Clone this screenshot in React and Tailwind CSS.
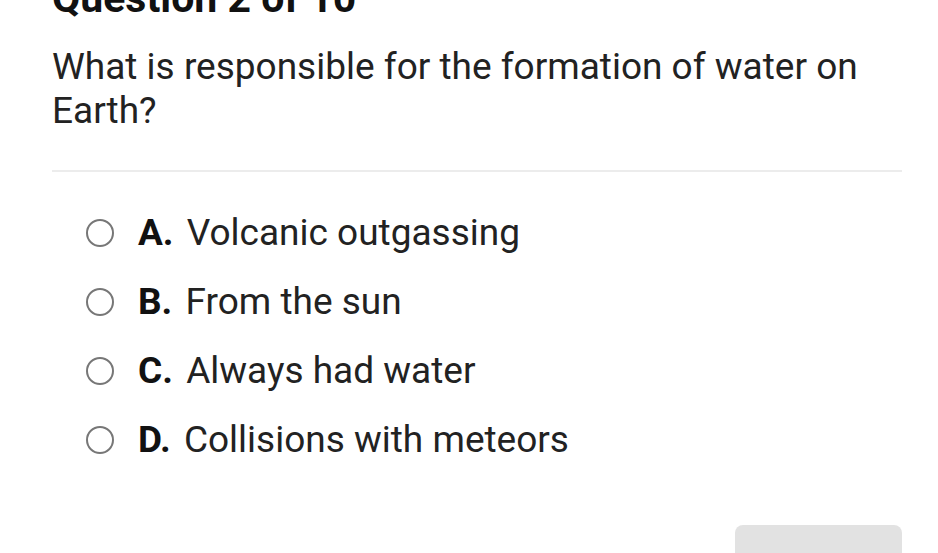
import React from "react";

const options = [
  { letter: "A.", text: "Volcanic outgassing" },
  { letter: "B.", text: "From the sun" },
  { letter: "C.", text: "Always had water" },
  { letter: "D.", text: "Collisions with meteors" },
];

const App = () => {
  return (
    <div
      className="w-[938px] h-[553px] overflow-hidden bg-white relative"
      style={{ fontFamily: "Roboto, 'Liberation Sans', sans-serif" }}
    >
      <div className="pl-[52px] pr-[36px]">
        <h1 className="text-[41px] leading-[44px] font-bold text-[#111] mt-[-24px]">
          Question 2 of 10
        </h1>
        <p className="mt-[25px] text-[37px] leading-[44px] text-[#222]">
          What is responsible for the formation of water on Earth?
        </p>
        <div className="mt-[37px] h-[2px] bg-[#ececec]" />
        <div className="mt-[39px] pl-[34px] flex flex-col gap-[25px]">
          {options.map((opt) => (
            <div key={opt.letter} className="flex items-center h-[44px]">
              <span className="w-[28px] h-[28px] rounded-full border-[2.5px] border-[#777] shrink-0" />
              <span className="ml-[24px] text-[37px] leading-[44px] text-[#222] whitespace-nowrap">
                <span className="font-bold text-[#111] mr-[4px]">{opt.letter}</span>{" "}
                {opt.text}
              </span>
            </div>
          ))}
        </div>
      </div>
      <div className="absolute left-[735px] top-[525px] w-[167px] h-[60px] rounded-[8px] bg-[#e2e2e2]" />
    </div>
  );
};

export default App;
